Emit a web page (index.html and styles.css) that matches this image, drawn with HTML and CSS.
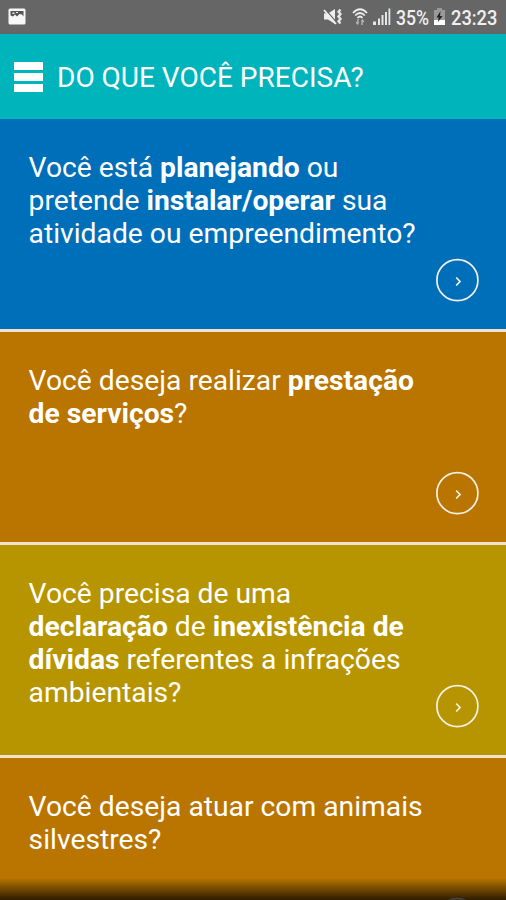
FILE: index.html
```
<!DOCTYPE html>
<html lang="pt-BR">

<head>
    <meta charset="UTF-8">
    <meta name="viewport" content="width=device-width, initial-scale=1.0">
    <title>Do que você precisa?</title>
    <link rel="stylesheet" href="styles.css">
</head>

<body>
    <div class="wrap">
        <div class="status">
            <svg class="icon-photo" width="18" height="17" viewBox="0 0 18 17">
                <rect x="0.5" y="0.5" width="17" height="16" rx="1.500" fill="#f7f7f7"/>
                <path d="M2.500 3h13v5.500l-1.500-2-2.500-.5-2.500 2.500-2-2-2 2-2.500-1z" fill="#555"/>
                <path d="M4.500 4.500h2v1.500h-2zM8 4h2v1H8z" fill="#eee"/>
            </svg>
            <div class="status-right">
                <svg class="icon-mute" width="20" height="18" viewBox="0 0 20 18">
                    <path d="M1 5.500h4L12 1v15l-7-4.500H1z" fill="#eee"/>
                    <path d="M2 1l12 14" stroke="#666" stroke-width="1.200"/>
                    <path d="M1 2l12 14" stroke="#eee" stroke-width="1.800"/>
                    <path d="M17.500 1.500l-2 2.200 2 2.300-2 2.500 2 2.500-2 2.200 2 2.300" fill="none" stroke="#e4e4e4" stroke-width="2.400"/>
                </svg>
                <svg class="icon-wifi" width="16" height="18" viewBox="0 0 16 18">
                    <path d="M1 5q7-7.500 14 0M3.200 7.500q4.800-5 9.600 0M5.500 10q2.500-3 5 0" fill="none" stroke="#eee" stroke-width="1.800"/>
                    <path d="M6 11v5M4.300 14L6 16.500M10 17v-5M10 11.500l1.800 2.500" fill="none" stroke="#b5b5b5" stroke-width="1.400"/>
                </svg>
                <svg class="icon-signal" width="18" height="17" viewBox="0 0 18 17">
                    <path d="M0 13.500h3V17H0zM5 10.500h2V17H5zM8.500 7h2v10h-2zM12 4h2v13h-2zM15.500 0.500h1.800V17h-1.800z" fill="#e6e6e6"/>
                </svg>
                <span class="percent">35%</span>
                <svg class="icon-battery" width="11" height="17" viewBox="0 0 11 17">
                    <path d="M3 0h5v2h3v10H0V2h3z" fill="#999"/>
                    <path d="M0 12h11v5H0z" fill="#fff"/>
                    <path d="M6.500 3L2.500 9.500h2.200L4 14l4.500-6H6z" fill="#222"/>
                </svg>
                <span class="clock">23:23</span>
            </div>
        </div>

        <div class="header">
            <div class="menu">
                <span></span>
                <span></span>
                <span></span>
            </div>
            <h1>DO QUE VOCÊ PRECISA?</h1>
        </div>

        <div class="list">
            <div class="item blue">
                <p>Você está <b>planejando</b> ou<br>pretende <b>instalar/operar</b> sua<br>atividade ou empreendimento?</p>
                <svg class="arrow" width="44" height="44" viewBox="0 0 44 44">
                    <circle cx="22.400" cy="22.200" r="20.500"/>
                    <path d="M21.200 19.500l3.800 4-3.800 4"/>
                </svg>
            </div>
            <div class="item orange">
                <p>Você deseja realizar <b>prestação<br>de serviços</b>?</p>
                <svg class="arrow" width="44" height="44" viewBox="0 0 44 44">
                    <circle cx="22.400" cy="22.200" r="20.500"/>
                    <path d="M21.200 19.500l3.800 4-3.800 4"/>
                </svg>
            </div>
            <div class="item yellow">
                <p>Você precisa de uma<br><b>declaração</b> de <b>inexistência de<br>dívidas</b> referentes a infrações<br>ambientais?</p>
                <svg class="arrow" width="44" height="44" viewBox="0 0 44 44">
                    <circle cx="22.400" cy="22.200" r="20.500"/>
                    <path d="M21.200 19.500l3.800 4-3.800 4"/>
                </svg>
            </div>
            <div class="item orange">
                <p>Você deseja atuar com animais<br>silvestres?</p>
                <svg class="arrow" width="44" height="44" viewBox="0 0 44 44">
                    <circle cx="22.400" cy="22.200" r="20.500"/>
                    <path d="M21.200 19.500l3.800 4-3.800 4"/>
                </svg>
            </div>
        </div>
        <div class="shade"></div>
    </div>
</body>

</html>
```
FILE: styles.css
```
* {
    margin: 0;
    padding: 0;
    box-sizing: border-box;
}

body {
    font-family: Roboto, "Liberation Sans", sans-serif;
    color: #fff;
}

.wrap {
    position: relative;
    width: 506px;
    height: 900px;
    overflow: hidden;
}

.status {
    display: flex;
    justify-content: space-between;
    height: 34px;
    padding: 8px 9px 0 8px;
    background: #666;
}

.status-right {
    display: flex;
    align-items: flex-start;
    font-size: 21px;
    font-weight: 500;
    line-height: 20px;
    color: #f0f0f0;
}

.icon-wifi {
    margin-left: 9px;
}

.icon-signal {
    margin-left: 5px;
}

.percent {
    width: 34px;
    margin-left: 5px;
    white-space: nowrap;
    transform: scaleX(0.84);
    transform-origin: left;
}

.icon-battery {
    margin-left: 4px;
}

.clock {
    width: 46px;
    margin-left: 6px;
    white-space: nowrap;
    transform: scaleX(0.87);
    transform-origin: left;
}

.header {
    display: flex;
    align-items: center;
    height: 85px;
    padding-left: 14px;
    background: #00b4bb;
}

.header h1 {
    margin-left: 14px;
    padding-top: 2px;
    font-size: 28px;
    font-weight: 400;
    line-height: 34px;
    white-space: nowrap;
}

.menu {
    display: flex;
    flex-direction: column;
    gap: 3px;
    width: 29px;
}

.menu span {
    height: 8px;
    background: #fff;
}

.item {
    display: flex;
    flex-direction: column;
    justify-content: space-between;
    height: 213px;
    padding: 31.600px 27px 27px 28.600px;
    border-bottom: 3px solid #f0e2cf;
}

.item p {
    height: 107px;
    font-size: 28.250px;
    line-height: 33.200px;
    white-space: nowrap;
}

.item b {
    font-weight: 700;
}

.blue {
    background: #006fba;
}

.orange {
    background: #b97500;
}

.yellow {
    background: #b79500;
}

.arrow {
    align-self: flex-end;
    fill: none;
    stroke: #f4f0ea;
    stroke-width: 1.700;
}

.shade {
    position: absolute;
    left: 0;
    bottom: 0;
    width: 100%;
    height: 22px;
    background: linear-gradient(rgba(0, 0, 0, 0), rgba(0, 0, 0, 0.76));
}
```
